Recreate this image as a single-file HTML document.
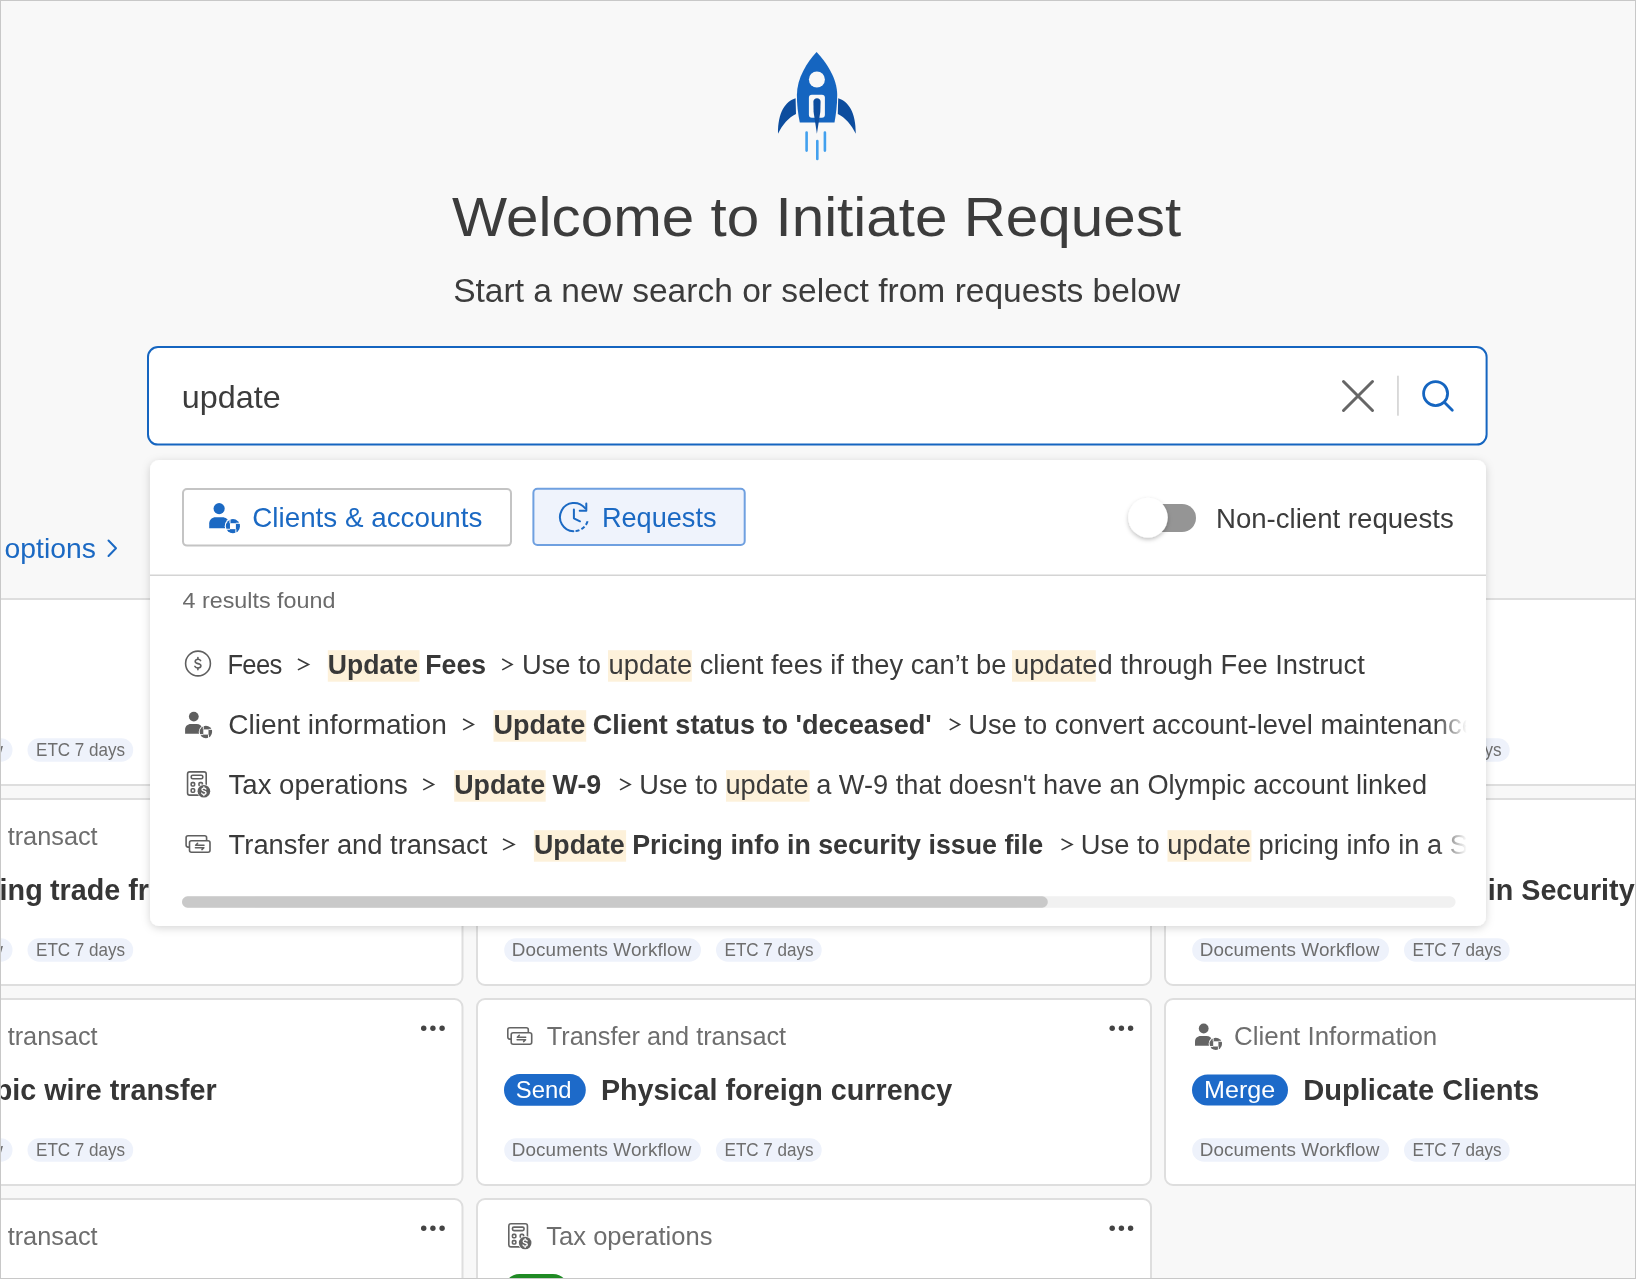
<!DOCTYPE html><html><head><meta charset="utf-8"><title>Initiate Request</title><style>html,body{margin:0;padding:0;background:#f8f8f8;overflow:hidden}svg{display:block;will-change:transform;font-family:"Liberation Sans", sans-serif}</style></head><body><svg width="1636" height="1279" viewBox="0 0 1636 1279"><defs><filter id="psh" x="-5%" y="-10%" width="110%" height="125%"><feDropShadow dx="0" dy="2" stdDeviation="4.5" flood-color="#000" flood-opacity="0.17"/></filter><filter id="ksh" x="-50%" y="-50%" width="200%" height="200%"><feDropShadow dx="0" dy="2" stdDeviation="2" flood-color="#000" flood-opacity="0.25"/></filter><clipPath id="rowclip"><rect x="150" y="600" width="1320" height="300"/></clipPath><linearGradient id="fade" x1="0" x2="1" y1="0" y2="0"><stop offset="0" stop-color="#fff" stop-opacity="0"/><stop offset="1" stop-color="#fff" stop-opacity="1"/></linearGradient></defs><rect x="0" y="0" width="1636" height="1279" fill="#f8f8f8"/>
<rect x="-211.5" y="599" width="674" height="186" rx="8" fill="#ffffff" stroke="#dedede" stroke-width="2"/>
<rect x="477" y="599" width="674" height="186" rx="8" fill="#ffffff" stroke="#dedede" stroke-width="2"/>
<rect x="1165" y="599" width="674" height="186" rx="8" fill="#ffffff" stroke="#dedede" stroke-width="2"/>
<rect x="-211.5" y="799" width="674" height="186" rx="8" fill="#ffffff" stroke="#dedede" stroke-width="2"/>
<rect x="477" y="799" width="674" height="186" rx="8" fill="#ffffff" stroke="#dedede" stroke-width="2"/>
<rect x="1165" y="799" width="674" height="186" rx="8" fill="#ffffff" stroke="#dedede" stroke-width="2"/>
<rect x="-211.5" y="999" width="674" height="186" rx="8" fill="#ffffff" stroke="#dedede" stroke-width="2"/>
<rect x="477" y="999" width="674" height="186" rx="8" fill="#ffffff" stroke="#dedede" stroke-width="2"/>
<rect x="1165" y="999" width="674" height="186" rx="8" fill="#ffffff" stroke="#dedede" stroke-width="2"/>
<rect x="-211.5" y="1199" width="674" height="186" rx="8" fill="#ffffff" stroke="#dedede" stroke-width="2"/>
<rect x="477" y="1199" width="674" height="186" rx="8" fill="#ffffff" stroke="#dedede" stroke-width="2"/>
<rect x="-184.3" y="738.2" width="196.8" height="23.6" rx="11.8" fill="#eef2fb"/>
<rect x="27.5" y="738.2" width="105.7" height="23.6" rx="11.8" fill="#eef2fb"/>
<text transform="translate(-176.75,755.60) scale(1.0500,1)" font-size="18" font-weight="400" fill="#6e6e6e" style="letter-spacing:0.084px">Documents Workflow</text>
<text transform="translate(36.05,755.60) scale(0.9500,1)" font-size="18" font-weight="400" fill="#6e6e6e" style="letter-spacing:-0.045px">ETC 7 days</text>
<circle cx="442.10" cy="628.3" r="2.7" fill="#444"/>
<circle cx="432.90" cy="628.3" r="2.7" fill="#444"/>
<circle cx="423.70" cy="628.3" r="2.7" fill="#444"/>
<rect x="504.2" y="738.2" width="196.8" height="23.6" rx="11.8" fill="#eef2fb"/>
<rect x="716" y="738.2" width="105.7" height="23.6" rx="11.8" fill="#eef2fb"/>
<text transform="translate(511.75,755.60) scale(1.0500,1)" font-size="18" font-weight="400" fill="#6e6e6e" style="letter-spacing:0.084px">Documents Workflow</text>
<text transform="translate(724.55,755.60) scale(0.9500,1)" font-size="18" font-weight="400" fill="#6e6e6e" style="letter-spacing:-0.045px">ETC 7 days</text>
<circle cx="1130.60" cy="628.3" r="2.7" fill="#444"/>
<circle cx="1121.40" cy="628.3" r="2.7" fill="#444"/>
<circle cx="1112.20" cy="628.3" r="2.7" fill="#444"/>
<rect x="1192.2" y="738.2" width="196.8" height="23.6" rx="11.8" fill="#eef2fb"/>
<rect x="1404" y="738.2" width="105.7" height="23.6" rx="11.8" fill="#eef2fb"/>
<text transform="translate(1199.75,755.60) scale(1.0500,1)" font-size="18" font-weight="400" fill="#6e6e6e" style="letter-spacing:0.084px">Documents Workflow</text>
<text transform="translate(1412.55,755.60) scale(0.9500,1)" font-size="18" font-weight="400" fill="#6e6e6e" style="letter-spacing:-0.045px">ETC 7 days</text>
<circle cx="1818.60" cy="628.3" r="2.7" fill="#444"/>
<circle cx="1809.40" cy="628.3" r="2.7" fill="#444"/>
<circle cx="1800.20" cy="628.3" r="2.7" fill="#444"/>
<rect x="-184.3" y="938.2" width="196.8" height="23.6" rx="11.8" fill="#eef2fb"/>
<rect x="27.5" y="938.2" width="105.7" height="23.6" rx="11.8" fill="#eef2fb"/>
<text transform="translate(-176.75,955.60) scale(1.0500,1)" font-size="18" font-weight="400" fill="#6e6e6e" style="letter-spacing:0.084px">Documents Workflow</text>
<text transform="translate(36.05,955.60) scale(0.9500,1)" font-size="18" font-weight="400" fill="#6e6e6e" style="letter-spacing:-0.045px">ETC 7 days</text>
<circle cx="442.10" cy="828.3" r="2.7" fill="#444"/>
<circle cx="432.90" cy="828.3" r="2.7" fill="#444"/>
<circle cx="423.70" cy="828.3" r="2.7" fill="#444"/>
<rect x="504.2" y="938.2" width="196.8" height="23.6" rx="11.8" fill="#eef2fb"/>
<rect x="716" y="938.2" width="105.7" height="23.6" rx="11.8" fill="#eef2fb"/>
<text transform="translate(511.75,955.60) scale(1.0500,1)" font-size="18" font-weight="400" fill="#6e6e6e" style="letter-spacing:0.084px">Documents Workflow</text>
<text transform="translate(724.55,955.60) scale(0.9500,1)" font-size="18" font-weight="400" fill="#6e6e6e" style="letter-spacing:-0.045px">ETC 7 days</text>
<circle cx="1130.60" cy="828.3" r="2.7" fill="#444"/>
<circle cx="1121.40" cy="828.3" r="2.7" fill="#444"/>
<circle cx="1112.20" cy="828.3" r="2.7" fill="#444"/>
<rect x="1192.2" y="938.2" width="196.8" height="23.6" rx="11.8" fill="#eef2fb"/>
<rect x="1404" y="938.2" width="105.7" height="23.6" rx="11.8" fill="#eef2fb"/>
<text transform="translate(1199.75,955.60) scale(1.0500,1)" font-size="18" font-weight="400" fill="#6e6e6e" style="letter-spacing:0.084px">Documents Workflow</text>
<text transform="translate(1412.55,955.60) scale(0.9500,1)" font-size="18" font-weight="400" fill="#6e6e6e" style="letter-spacing:-0.045px">ETC 7 days</text>
<circle cx="1818.60" cy="828.3" r="2.7" fill="#444"/>
<circle cx="1809.40" cy="828.3" r="2.7" fill="#444"/>
<circle cx="1800.20" cy="828.3" r="2.7" fill="#444"/>
<rect x="-184.3" y="1138.2" width="196.8" height="23.6" rx="11.8" fill="#eef2fb"/>
<rect x="27.5" y="1138.2" width="105.7" height="23.6" rx="11.8" fill="#eef2fb"/>
<text transform="translate(-176.75,1155.60) scale(1.0500,1)" font-size="18" font-weight="400" fill="#6e6e6e" style="letter-spacing:0.084px">Documents Workflow</text>
<text transform="translate(36.05,1155.60) scale(0.9500,1)" font-size="18" font-weight="400" fill="#6e6e6e" style="letter-spacing:-0.045px">ETC 7 days</text>
<circle cx="442.10" cy="1028.3" r="2.7" fill="#444"/>
<circle cx="432.90" cy="1028.3" r="2.7" fill="#444"/>
<circle cx="423.70" cy="1028.3" r="2.7" fill="#444"/>
<rect x="504.2" y="1138.2" width="196.8" height="23.6" rx="11.8" fill="#eef2fb"/>
<rect x="716" y="1138.2" width="105.7" height="23.6" rx="11.8" fill="#eef2fb"/>
<text transform="translate(511.75,1155.60) scale(1.0500,1)" font-size="18" font-weight="400" fill="#6e6e6e" style="letter-spacing:0.084px">Documents Workflow</text>
<text transform="translate(724.55,1155.60) scale(0.9500,1)" font-size="18" font-weight="400" fill="#6e6e6e" style="letter-spacing:-0.045px">ETC 7 days</text>
<circle cx="1130.60" cy="1028.3" r="2.7" fill="#444"/>
<circle cx="1121.40" cy="1028.3" r="2.7" fill="#444"/>
<circle cx="1112.20" cy="1028.3" r="2.7" fill="#444"/>
<rect x="1192.2" y="1138.2" width="196.8" height="23.6" rx="11.8" fill="#eef2fb"/>
<rect x="1404" y="1138.2" width="105.7" height="23.6" rx="11.8" fill="#eef2fb"/>
<text transform="translate(1199.75,1155.60) scale(1.0500,1)" font-size="18" font-weight="400" fill="#6e6e6e" style="letter-spacing:0.084px">Documents Workflow</text>
<text transform="translate(1412.55,1155.60) scale(0.9500,1)" font-size="18" font-weight="400" fill="#6e6e6e" style="letter-spacing:-0.045px">ETC 7 days</text>
<circle cx="1818.60" cy="1028.3" r="2.7" fill="#444"/>
<circle cx="1809.40" cy="1028.3" r="2.7" fill="#444"/>
<circle cx="1800.20" cy="1028.3" r="2.7" fill="#444"/>
<rect x="-184.3" y="1338.2" width="196.8" height="23.6" rx="11.8" fill="#eef2fb"/>
<rect x="27.5" y="1338.2" width="105.7" height="23.6" rx="11.8" fill="#eef2fb"/>
<text transform="translate(-176.75,1355.60) scale(1.0500,1)" font-size="18" font-weight="400" fill="#6e6e6e" style="letter-spacing:0.084px">Documents Workflow</text>
<text transform="translate(36.05,1355.60) scale(0.9500,1)" font-size="18" font-weight="400" fill="#6e6e6e" style="letter-spacing:-0.045px">ETC 7 days</text>
<circle cx="442.10" cy="1228.3" r="2.7" fill="#444"/>
<circle cx="432.90" cy="1228.3" r="2.7" fill="#444"/>
<circle cx="423.70" cy="1228.3" r="2.7" fill="#444"/>
<rect x="504.2" y="1338.2" width="196.8" height="23.6" rx="11.8" fill="#eef2fb"/>
<rect x="716" y="1338.2" width="105.7" height="23.6" rx="11.8" fill="#eef2fb"/>
<text transform="translate(511.75,1355.60) scale(1.0500,1)" font-size="18" font-weight="400" fill="#6e6e6e" style="letter-spacing:0.084px">Documents Workflow</text>
<text transform="translate(724.55,1355.60) scale(0.9500,1)" font-size="18" font-weight="400" fill="#6e6e6e" style="letter-spacing:-0.045px">ETC 7 days</text>
<circle cx="1130.60" cy="1228.3" r="2.7" fill="#444"/>
<circle cx="1121.40" cy="1228.3" r="2.7" fill="#444"/>
<circle cx="1112.20" cy="1228.3" r="2.7" fill="#444"/>
<g transform="translate(501.7,1017.1)" stroke="#646464" stroke-width="1.6" fill="none"><rect x="6.1" y="10.7" width="20.5" height="11.3" rx="2"/><rect x="9.5" y="15.7" width="20.5" height="11.4" rx="2" fill="#ffffff"/><path d="M24.0,20.1 L15.6,20.1 L17.6,18.2 M15.4,22.6 L23.9,22.6 L21.9,24.5" stroke-width="1.5" stroke-linecap="round" stroke-linejoin="round"/></g>
<text transform="translate(546.70,1045.00) scale(1.0121,1)" font-size="25" font-weight="400" fill="#6e6e6e" style="letter-spacing:0.000px">Transfer and transact</text>
<g transform="translate(-186.8,1017.1)" stroke="#646464" stroke-width="1.6" fill="none"><rect x="6.1" y="10.7" width="20.5" height="11.3" rx="2"/><rect x="9.5" y="15.7" width="20.5" height="11.4" rx="2" fill="#ffffff"/><path d="M24.0,20.1 L15.6,20.1 L17.6,18.2 M15.4,22.6 L23.9,22.6 L21.9,24.5" stroke-width="1.5" stroke-linecap="round" stroke-linejoin="round"/></g>
<text transform="translate(-141.80,1045.00) scale(1.0121,1)" font-size="25" font-weight="400" fill="#6e6e6e" style="letter-spacing:0.000px">Transfer and transact</text>
<g transform="translate(-186.8,817.1)" stroke="#646464" stroke-width="1.6" fill="none"><rect x="6.1" y="10.7" width="20.5" height="11.3" rx="2"/><rect x="9.5" y="15.7" width="20.5" height="11.4" rx="2" fill="#ffffff"/><path d="M24.0,20.1 L15.6,20.1 L17.6,18.2 M15.4,22.6 L23.9,22.6 L21.9,24.5" stroke-width="1.5" stroke-linecap="round" stroke-linejoin="round"/></g>
<text transform="translate(-141.80,845.00) scale(1.0121,1)" font-size="25" font-weight="400" fill="#6e6e6e" style="letter-spacing:0.000px">Transfer and transact</text>
<g transform="translate(-186.8,1217.1)" stroke="#646464" stroke-width="1.6" fill="none"><rect x="6.1" y="10.7" width="20.5" height="11.3" rx="2"/><rect x="9.5" y="15.7" width="20.5" height="11.4" rx="2" fill="#ffffff"/><path d="M24.0,20.1 L15.6,20.1 L17.6,18.2 M15.4,22.6 L23.9,22.6 L21.9,24.5" stroke-width="1.5" stroke-linecap="round" stroke-linejoin="round"/></g>
<text transform="translate(-141.80,1245.00) scale(1.0121,1)" font-size="25" font-weight="400" fill="#6e6e6e" style="letter-spacing:0.000px">Transfer and transact</text>
<g transform="translate(1189.9,1017.3) scale(1.0)" fill="#646464"><circle cx="13.8" cy="11.2" r="4.9"/><path d="M5.1,28.4 L5.1,24.2 C5.1,21.0 7.6,18.7 10.8,18.7 L16.6,18.7 C19.6,18.7 21.9,20.6 22.4,23.4 L22.4,28.4 Z"/><circle cx="25.9" cy="26.6" r="7.2" fill="#ffffff"/><circle cx="25.9" cy="26.6" r="6.2"/><rect x="23.3" y="24.0" width="5.2" height="5.2" fill="#ffffff"/><path d="M28.5,24.0 L32.8,24.0 M28.5,29.2 L28.5,33.5 M23.3,29.2 L19.0,29.2 M23.3,24.0 L23.3,19.7" stroke="#ffffff" stroke-width="0.9" fill="none"/></g>
<text transform="translate(1233.96,1045.00) scale(1.0380,1)" font-size="25" font-weight="400" fill="#6e6e6e" style="letter-spacing:0.000px">Client Information</text>
<g transform="translate(501.25,1217.0)"><g fill="none" stroke="#646464" stroke-width="1.6"><rect x="7.55" y="6.7" width="18.65" height="23.2" rx="2.2"/><rect x="11.2" y="10.1" width="11.6" height="3.5" rx="1.5"/><rect x="11.2" y="17.4" width="3.4" height="3.4" rx="1"/><rect x="11.2" y="23.6" width="3.4" height="3.4" rx="1"/><rect x="19.0" y="17.4" width="3.4" height="3.4" rx="1"/></g><circle cx="23.9" cy="26.0" r="6.9" fill="#ffffff"/><circle cx="23.9" cy="26.0" r="6.3" fill="#646464"/><path d="M25.9,23.9 C25.5,23.2 24.8,22.9 23.9,22.9 C22.7,22.9 21.9,23.5 21.9,24.4 C21.9,26.6 26.0,25.4 26.0,27.6 C26.0,28.6 25.1,29.2 23.9,29.2 C22.9,29.2 22.1,28.8 21.7,28.0 M23.9,21.6 L23.9,22.9 M23.9,29.2 L23.9,30.4" fill="none" stroke="#ffffff" stroke-width="1.3" stroke-linecap="round"/></g>
<text transform="translate(546.30,1245.00) scale(1.0228,1)" font-size="25" font-weight="400" fill="#6e6e6e" style="letter-spacing:-0.000px">Tax operations</text>
<rect x="504" y="1074" width="81.80" height="31.80" rx="15.90" fill="#1d6ac9"/>
<text transform="translate(515.81,1097.60) scale(0.9944,1)" font-size="24" font-weight="400" fill="#ffffff" style="letter-spacing:0.000px">Send</text>
<rect x="1192" y="1074.4" width="96.00" height="31.20" rx="15.60" fill="#1d6ac9"/>
<text transform="translate(1204.05,1097.60) scale(1.0468,1)" font-size="24" font-weight="400" fill="#ffffff" style="letter-spacing:0.000px">Merge</text>
<rect x="503.5" y="1274" width="65.50" height="32.00" rx="16.00" fill="#1f8a24"/>
<text transform="translate(600.91,1100.00) scale(0.9911,1)" font-size="29" font-weight="700" fill="#363636" style="letter-spacing:0.000px">Physical foreign currency</text>
<text transform="translate(1303.20,1100.00) scale(1.0037,1)" font-size="29" font-weight="700" fill="#363636" style="letter-spacing:0.000px">Duplicate Clients</text>
<text transform="translate(-5.24,1100.00) scale(0.9911,1)" font-size="29" font-weight="700" fill="#363636" style="letter-spacing:0.000px">pic wire transfer</text>
<text transform="translate(-0.40,899.50) scale(0.9911,1)" font-size="29" font-weight="700" fill="#363636" style="letter-spacing:0.000px">ing</text>
<text transform="translate(50.00,899.50) scale(0.9911,1)" font-size="29" font-weight="700" fill="#363636" style="letter-spacing:0.000px">trade from</text>
<text transform="translate(1487.72,899.60) scale(0.9911,1)" font-size="29" font-weight="700" fill="#363636" style="letter-spacing:0.000px">in Security</text>
<g><path d="M816.6,52 C826,62 837.2,78 837.2,95 C837.2,105 836,114 834.5,122.4 L799.8,122.4 C798,114 796.9,105 796.9,95 C796.9,78 807.2,62 816.6,52 Z" fill="#1565c0"/><path d="M795.6,98.3 C785.5,101.5 777.8,112 778,133.8 C782.5,124.5 788.5,117.5 796,113.9 Z" fill="#0d4d9e"/><path d="M838.2,98.3 C848.3,101.5 856,112 855.8,133.8 C851.3,124.5 845.3,117.5 837.8,113.9 Z" fill="#0d4d9e"/><circle cx="816.9" cy="79.5" r="8" fill="#f8f8f8"/><rect x="808.9" y="94.7" width="16" height="23" rx="3" fill="#f8f8f8"/><path d="M813.4,101.8 C813.4,99.6 814.9,98.3 817.0,98.3 C819.1,98.3 820.6,99.6 820.6,101.8 L820.3,112 L816.9,133.8 L813.6,112 Z" fill="#0d4d9e"/><path d="M806.6,132.6 L806.6,150.6 M817.3,141.1 L817.3,159 M824.9,132.6 L824.9,150.6" stroke="#42a0ee" stroke-width="2.6" stroke-linecap="round"/></g>
<text transform="translate(452.00,235.80) scale(1.0429,1)" font-size="56" font-weight="400" fill="#3c3c3c" style="letter-spacing:0.000px">Welcome to Initiate Request</text>
<text transform="translate(453.18,302.00) scale(1.0168,1)" font-size="33" font-weight="400" fill="#3c3c3c" style="letter-spacing:0.000px">Start a new search or select from requests below</text>
<rect x="148" y="347" width="1338.6" height="97.6" rx="10" fill="#ffffff" stroke="#1565c0" stroke-width="2"/>
<text transform="translate(181.78,408.00) scale(1.0107,1)" font-size="32" font-weight="400" fill="#3c3c3c" style="letter-spacing:0.000px">update</text>
<path d="M1343.5,381.5 L1372.5,410.5 M1372.5,381.5 L1343.5,410.5" stroke="#666666" stroke-width="3" stroke-linecap="round"/>
<rect x="1397.2" y="375.7" width="1.5" height="40" fill="#cfcfcf"/>
<g stroke="#1565c0" stroke-width="2.8" fill="none" stroke-linecap="round"><circle cx="1435.6" cy="393.6" r="12"/><path d="M1444.3,402.3 L1452.3,410.3"/></g>
<text transform="translate(4.55,557.60) scale(1.0495,1)" font-size="27" font-weight="400" fill="#1b69c3" style="letter-spacing:0.000px">options</text>
<path d="M108.5,540.5 L116,548.3 L108.5,556" stroke="#1b69c3" stroke-width="2" fill="none" stroke-linecap="round" stroke-linejoin="round"/>
<rect x="150" y="460" width="1336" height="466" rx="9" fill="#ffffff" filter="url(#psh)"/>
<rect x="183" y="489" width="328" height="56.6" rx="4" fill="#ffffff" stroke="#c4c4c4" stroke-width="2"/>
<g transform="translate(203.4,495.85) scale(1.14)" fill="#1b69c3"><circle cx="13.8" cy="11.2" r="4.9"/><path d="M5.1,28.4 L5.1,24.2 C5.1,21.0 7.6,18.7 10.8,18.7 L16.6,18.7 C19.6,18.7 21.9,20.6 22.4,23.4 L22.4,28.4 Z"/><circle cx="25.9" cy="26.6" r="7.2" fill="#ffffff"/><circle cx="25.9" cy="26.6" r="6.2"/><rect x="23.3" y="24.0" width="5.2" height="5.2" fill="#ffffff"/><path d="M28.5,24.0 L32.8,24.0 M28.5,29.2 L28.5,33.5 M23.3,29.2 L19.0,29.2 M23.3,24.0 L23.3,19.7" stroke="#ffffff" stroke-width="0.9" fill="none"/></g>
<text transform="translate(252.27,526.50) scale(1.0297,1)" font-size="27" font-weight="400" fill="#1b69c3" style="letter-spacing:0.000px">Clients &amp; accounts</text>
<rect x="533.4" y="488.8" width="211.3" height="56.2" rx="4" fill="#eff3fc" stroke="#6fa0e0" stroke-width="2"/>
<g stroke="#1b69c3" stroke-width="2.0" fill="none" stroke-linecap="round" stroke-linejoin="round"><path d="M585.06,508.23 A14.1,14.1 0 1 0 573.36,531.18"/><path d="M573.36,531.18 A14.1,14.1 0 0 0 587.58,521.22" stroke-linecap="butt" stroke-dasharray="0 2.2 4.0 2.2 4.0 2.2 4.0"/><path d="M586.3,503.6 L586.3,510.8 L579.7,510.8"/><path d="M573.9,509.6 L573.9,518.3 L580,521.3"/></g>
<text transform="translate(601.89,526.90) scale(1.0057,1)" font-size="27" font-weight="400" fill="#1b69c3" style="letter-spacing:0.000px">Requests</text>
<rect x="1140" y="504" width="56" height="28" rx="14" fill="#959595"/>
<circle cx="1148" cy="517.6" r="19.8" fill="#ffffff" filter="url(#ksh)"/>
<text transform="translate(1215.95,528.00) scale(1.0225,1)" font-size="27" font-weight="400" fill="#3c3c3c" style="letter-spacing:0.000px">Non-client requests</text>
<rect x="150" y="574.5" width="1336" height="1.5" fill="#d4d4d4"/>
<text transform="translate(182.50,607.80) scale(1.0369,1)" font-size="22.5" font-weight="400" fill="#6b6b6b" style="letter-spacing:0.000px">4 results found</text>
<g transform="translate(180,645.2)" fill="none" stroke="#5f5f5f" stroke-width="1.6" stroke-linecap="round"><circle cx="18" cy="18.3" r="12.4"/><path d="M20.6,15.4 C20.1,14.5 19.2,14.1 18.0,14.1 C16.3,14.1 15.2,15.0 15.2,16.3 C15.2,19.3 20.9,17.6 20.9,20.6 C20.9,22.0 19.7,22.8 18.0,22.8 C16.6,22.8 15.5,22.2 14.9,21.2"/><path d="M17.9,12.4 L17.9,14.1 M17.9,22.8 L17.9,24.5"/></g>
<rect x="327.8" y="650.20" width="91.70" height="31.5" fill="#fdf1da"/>
<rect x="608" y="650.20" width="83.80" height="31.5" fill="#fdf1da"/>
<rect x="1012" y="650.20" width="83.80" height="31.5" fill="#fdf1da"/>
<text transform="translate(227.40,673.90) scale(0.9500,1)" font-size="27" font-weight="400" fill="#3b3b3b" style="letter-spacing:-0.754px">Fees</text>
<path d="M297.90,659.00 L308.50,664.45 L297.90,669.90" stroke="#3b3b3b" stroke-width="1.6" fill="none" stroke-miterlimit="10"/>
<text transform="translate(327.81,673.90) scale(0.9853,1)" font-size="27" font-weight="700" fill="#383838" style="letter-spacing:0.000px">Update Fees</text>
<path d="M502.20,659.00 L512.00,664.45 L502.20,669.90" stroke="#3b3b3b" stroke-width="1.6" fill="none" stroke-miterlimit="10"/>
<text transform="translate(521.98,673.90) scale(1.0119,1)" font-size="27" font-weight="400" fill="#3b3b3b" style="letter-spacing:0.000px">Use to update client fees if they can’t be updated through Fee Instruct</text>
<g transform="translate(180,705.4) scale(1.0)" fill="#5f5f5f"><circle cx="13.8" cy="11.2" r="4.9"/><path d="M5.1,28.4 L5.1,24.2 C5.1,21.0 7.6,18.7 10.8,18.7 L16.6,18.7 C19.6,18.7 21.9,20.6 22.4,23.4 L22.4,28.4 Z"/><circle cx="25.9" cy="26.6" r="7.2" fill="#ffffff"/><circle cx="25.9" cy="26.6" r="6.2"/><rect x="23.3" y="24.0" width="5.2" height="5.2" fill="#ffffff"/><path d="M28.5,24.0 L32.8,24.0 M28.5,29.2 L28.5,33.5 M23.3,29.2 L19.0,29.2 M23.3,24.0 L23.3,19.7" stroke="#ffffff" stroke-width="0.9" fill="none"/></g>
<rect x="493.5" y="710.20" width="92.70" height="31.5" fill="#fdf1da"/>
<text transform="translate(228.16,733.90) scale(1.0414,1)" font-size="27" font-weight="400" fill="#3b3b3b" style="letter-spacing:0.000px">Client information</text>
<path d="M463.10,719.00 L473.30,724.45 L463.10,729.90" stroke="#3b3b3b" stroke-width="1.6" fill="none" stroke-miterlimit="10"/>
<text transform="translate(493.50,733.90) scale(1.0027,1)" font-size="27" font-weight="700" fill="#383838" style="letter-spacing:0.000px">Update Client status to 'deceased'</text>
<path d="M949.70,719.00 L959.50,724.45 L949.70,729.90" stroke="#3b3b3b" stroke-width="1.6" fill="none" stroke-miterlimit="10"/>
<g clip-path="url(#rowclip)"><text transform="translate(968.18,733.90) scale(1.0119,1)" font-size="27" font-weight="400" fill="#3b3b3b" style="letter-spacing:0.000px">Use to convert account-level maintenance requests to client-level</text></g>
<g transform="translate(180,765.2)"><g fill="none" stroke="#5f5f5f" stroke-width="1.6"><rect x="7.55" y="6.7" width="18.65" height="23.2" rx="2.2"/><rect x="11.2" y="10.1" width="11.6" height="3.5" rx="1.5"/><rect x="11.2" y="17.4" width="3.4" height="3.4" rx="1"/><rect x="11.2" y="23.6" width="3.4" height="3.4" rx="1"/><rect x="19.0" y="17.4" width="3.4" height="3.4" rx="1"/></g><circle cx="23.9" cy="26.0" r="6.9" fill="#ffffff"/><circle cx="23.9" cy="26.0" r="6.3" fill="#5f5f5f"/><path d="M25.9,23.9 C25.5,23.2 24.8,22.9 23.9,22.9 C22.7,22.9 21.9,23.5 21.9,24.4 C21.9,26.6 26.0,25.4 26.0,27.6 C26.0,28.6 25.1,29.2 23.9,29.2 C22.9,29.2 22.1,28.8 21.7,28.0 M23.9,21.6 L23.9,22.9 M23.9,29.2 L23.9,30.4" fill="none" stroke="#ffffff" stroke-width="1.3" stroke-linecap="round"/></g>
<rect x="454.2" y="770.20" width="91.50" height="31.5" fill="#fdf1da"/>
<rect x="726" y="770.20" width="83.60" height="31.5" fill="#fdf1da"/>
<text transform="translate(228.60,793.90) scale(1.0211,1)" font-size="27" font-weight="400" fill="#3b3b3b" style="letter-spacing:0.000px">Tax operations</text>
<path d="M423.20,779.00 L433.50,784.45 L423.20,789.90" stroke="#3b3b3b" stroke-width="1.6" fill="none" stroke-miterlimit="10"/>
<text transform="translate(454.21,793.90) scale(0.9943,1)" font-size="27" font-weight="700" fill="#383838" style="letter-spacing:0.000px">Update W-9</text>
<path d="M620.00,779.00 L630.10,784.45 L620.00,789.90" stroke="#3b3b3b" stroke-width="1.6" fill="none" stroke-miterlimit="10"/>
<text transform="translate(639.28,793.90) scale(1.0076,1)" font-size="27" font-weight="400" fill="#3b3b3b" style="letter-spacing:-0.000px">Use to update a W-9 that doesn't have an Olympic account linked</text>
<g transform="translate(180,825.1)" stroke="#5f5f5f" stroke-width="1.6" fill="none"><rect x="6.1" y="10.7" width="20.5" height="11.3" rx="2"/><rect x="9.5" y="15.7" width="20.5" height="11.4" rx="2" fill="#ffffff"/><path d="M24.0,20.1 L15.6,20.1 L17.6,18.2 M15.4,22.6 L23.9,22.6 L21.9,24.5" stroke-width="1.5" stroke-linecap="round" stroke-linejoin="round"/></g>
<rect x="533.9" y="830.20" width="92.20" height="31.5" fill="#fdf1da"/>
<rect x="1167.5" y="830.20" width="83.90" height="31.5" fill="#fdf1da"/>
<text transform="translate(228.60,853.90) scale(1.0128,1)" font-size="27" font-weight="400" fill="#3b3b3b" style="letter-spacing:0.000px">Transfer and transact</text>
<path d="M503.00,839.00 L514.00,844.45 L503.00,849.90" stroke="#3b3b3b" stroke-width="1.6" fill="none" stroke-miterlimit="10"/>
<text transform="translate(533.91,853.90) scale(0.9928,1)" font-size="27" font-weight="700" fill="#383838" style="letter-spacing:0.000px">Update Pricing info in security issue file</text>
<path d="M1061.50,839.00 L1072.00,844.45 L1061.50,849.90" stroke="#3b3b3b" stroke-width="1.6" fill="none" stroke-miterlimit="10"/>
<g clip-path="url(#rowclip)"><text transform="translate(1080.78,853.90) scale(1.0119,1)" font-size="27" font-weight="400" fill="#3b3b3b" style="letter-spacing:0.000px">Use to update pricing info in a Security issue file</text></g>
<rect x="1436" y="630" width="31" height="240" fill="url(#fade)"/>
<rect x="1466.5" y="630" width="18" height="240" fill="#ffffff"/>
<rect x="182" y="896.3" width="1273.6" height="11.4" rx="5.7" fill="#f1f1f1"/>
<rect x="182" y="896.3" width="865.8" height="11.4" rx="5.7" fill="#c9c9c9"/>
<rect x="0.5" y="0.5" width="1635" height="1278" fill="none" stroke="#c8c8c8" stroke-width="1"/></svg></body></html>
